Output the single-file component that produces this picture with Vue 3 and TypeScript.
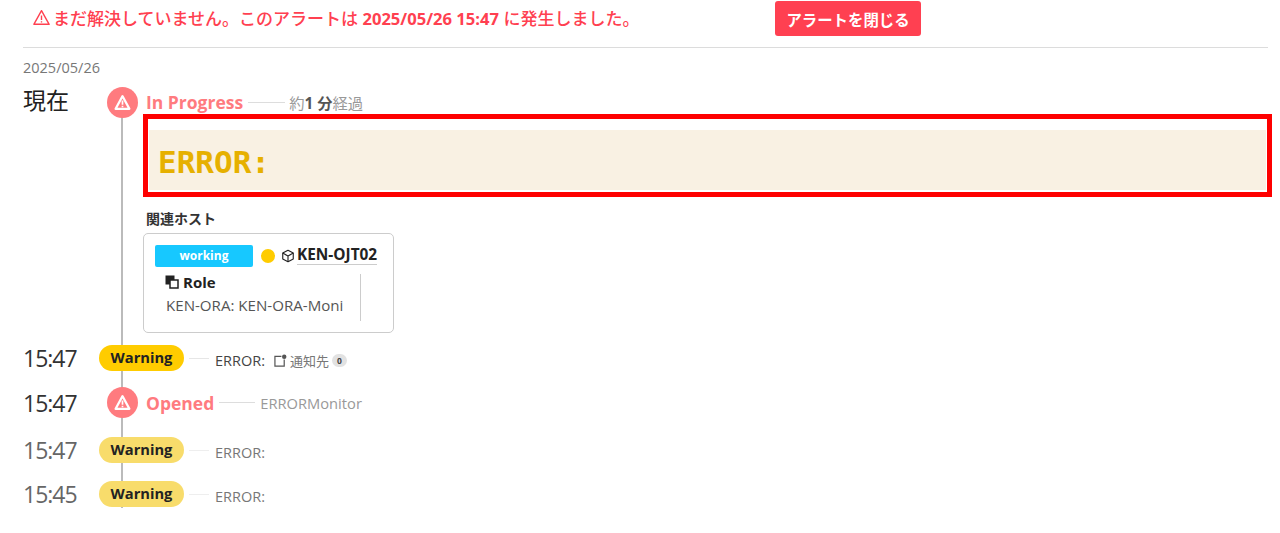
<script setup lang="ts">
interface Row { time: string; muted: boolean; message: string; notify: boolean }
const warningsA: Row[] = [{ time: '15:47', muted: false, message: 'ERROR:', notify: true }]
const warningsB: Row[] = [
  { time: '15:47', muted: true, message: 'ERROR:', notify: false },
  { time: '15:45', muted: true, message: 'ERROR:', notify: false },
]
</script>

<template>
  <div class="page">
    <header class="top">
      <p class="alert">
        <svg class="alert-icon" viewBox="0 0 16 16" fill="none" stroke="currentColor" stroke-width="1.3">
          <path d="M8 1.6 15.2 14.4H.8Z" stroke-linejoin="round" />
          <path d="M8 6v4.4M8 11.6v1.2" />
        </svg>
        <span>まだ解決していません。このアラートは <b>2025/05/26 15:47</b> に発生しました。</span>
      </p>
      <button class="close" type="button">アラートを閉じる</button>
    </header>

    <div class="date">2025/05/26</div>

    <div class="timeline">
      <div class="rail"></div>

      <section class="row status-row now">
        <div class="time now-time">現在</div>
        <div class="marker">
          <span class="circle">
            <svg viewBox="0 0 16 16"><path d="M8 2 14.5 14H1.5Z" fill="none" stroke="#fff" stroke-width="2" stroke-linejoin="round" /><path d="M8 6.2v3.8M8 11v1.4" stroke="#fff" stroke-width="1.6" /></svg>
          </span>
        </div>
        <div class="status-line">
          <strong class="status">In Progress</strong>
          <i class="dash long"></i>
          <span class="sub">約<b>1 分</b>経過</span>
        </div>
      </section>

      <div class="detail">
        <div class="highlight">
          <div class="message">ERROR:</div>
        </div>
        <h4 class="hosts-title">関連ホスト</h4>
        <div class="host-card">
          <div class="host-head">
            <span class="tag">working</span>
            <span class="dot"></span>
            <svg class="cube" viewBox="0 0 16 16" fill="none" stroke="#222" stroke-width="1.3" stroke-linejoin="round">
              <path d="M8 1.5 14 4.7V11.3L8 14.5 2 11.3V4.7Z" />
              <path d="M2 4.7 8 8 14 4.7M8 8V14.5" />
            </svg>
            <span class="host-name">KEN-OJT02</span>
          </div>
          <div class="host-body">
            <div class="role-col">
              <div class="role-title">
                <svg class="role-icon" viewBox="0 0 14 14">
                  <rect x="0.5" y="0.5" width="9" height="9" fill="#222" />
                  <rect x="5" y="5" width="8" height="8" fill="#fff" stroke="#222" stroke-width="1.5" />
                </svg>
                Role
              </div>
              <div class="role-text">KEN-ORA: KEN-ORA-Moni</div>
            </div>
            <div class="divider"></div>
          </div>
        </div>
      </div>

      <section v-for="r in warningsA" :key="r.time" class="row warn-row first-warn">
        <div class="time">{{ r.time }}</div>
        <div class="marker"><span class="pill">Warning</span></div>
        <div class="warn-line">
          <i class="dash short"></i>
          <span class="msg">{{ r.message }}</span>
          <span v-if="r.notify" class="notify">
            <svg class="bell" viewBox="0 0 14 14" fill="none" stroke="#555" stroke-width="1.3">
              <path d="M8 2.5H1V13H11V6" />
              <circle cx="11" cy="3" r="2.4" fill="#555" stroke="none" />
            </svg>
            通知先<span class="count">0</span>
          </span>
        </div>
      </section>

      <section class="row status-row opened">
        <div class="time">15:47</div>
        <div class="marker">
          <span class="circle">
            <svg viewBox="0 0 16 16"><path d="M8 2 14.5 14H1.5Z" fill="none" stroke="#fff" stroke-width="2" stroke-linejoin="round" /><path d="M8 6.2v3.8M8 11v1.4" stroke="#fff" stroke-width="1.6" /></svg>
          </span>
        </div>
        <div class="status-line">
          <strong class="status">Opened</strong>
          <i class="dash long opened-dash"></i>
          <span class="sub opened-sub">ERRORMonitor</span>
        </div>
      </section>

      <section v-for="r in warningsB" :key="r.time" class="row warn-row muted">
        <div class="time">{{ r.time }}</div>
        <div class="marker"><span class="pill">Warning</span></div>
        <div class="warn-line">
          <i class="dash short"></i>
          <span class="msg">{{ r.message }}</span>
        </div>
      </section>
    </div>
  </div>
</template>

<style scoped>
.page {
  height: 533px;
  overflow: hidden;
  box-sizing: border-box;
  padding: 0 12px 0 23px;
  background: #fff;
  color: #222;
  font-family: "Open Sans", "Noto Sans CJK JP", sans-serif;
}
.top {
  box-sizing: border-box;
  border-bottom: 1px solid #dcdcdc;
  display: flex;
  align-items: flex-start;
  height: 48px;
}
.alert {
  margin: 0;
  width: 752px;
  height: 34px;
  padding-left: 10px;
  box-sizing: border-box;
  display: flex;
  align-items: center;
  gap: 3px;
  color: #ff4050;
  font-size: 17px;
  font-weight: 500;
  white-space: nowrap;
}
.alert b { font-weight: 700; font-size: 16.6px; }
.alert-icon { width: 17px; height: 17px; flex: none; }
.close {
  margin-top: 1px;
  width: 146px;
  height: 35px;
  border: 0;
  border-radius: 3px;
  background: #ff4051;
  color: #fff;
  font: 700 15.4px "Noto Sans CJK JP", sans-serif;
}
.date {
  margin-top: 11px;
  height: 18px;
  line-height: 18px;
  font-size: 14.5px;
  color: #777;
}
.timeline { position: relative; margin-top: 10px; }
.rail {
  position: absolute;
  left: 98px;
  top: 20px;
  height: 401px;
  width: 2px;
  background: #bbb;
}
.row {
  position: relative;
  display: grid;
  grid-template-columns: 76px 47px 1fr;
  align-items: center;
}
.time { font-size: 23px; letter-spacing: -1px; line-height: 30px; color: #333; }
.now { height: 30px; grid-template-rows: 30px; }
.now-time { font-size: 23px; letter-spacing: 0; color: #222; margin-bottom: 4px; }
.marker { display: flex; justify-content: center; }
.circle {
  width: 31px;
  height: 31px;
  border-radius: 50%;
  background: #ff7b7f;
  display: flex;
  align-items: center;
  justify-content: center;
}
.circle svg { width: 17px; height: 17px; }
.status-line { display: flex; align-items: center; }
.status { font-size: 17.5px; line-height: 24px; color: #ff7b7f; font-weight: 700; }
.sub { font-size: 15.3px; color: #999; white-space: nowrap; }
.sub b { color: #555; font-weight: 700; }
.opened-sub { font-size: 14.7px; }
.dash { display: block; height: 1px; background: #ddd; flex: none; }
.long { width: 37px; margin: 0 4px 0 5px; }
.opened-dash { width: 36px; margin: 0 5px 0 5px; }
.short { width: 20px; margin: -4px 6px 0 5px; }
.detail { margin-left: 122px; }
.highlight {
  margin: -3px 0 0 -2px;
  width: 1129px;
  height: 83px;
  box-sizing: border-box;
  border: 5px solid #fe0000;
  padding: 11px 1px 2px;
  background: #fff;
  position: relative;
}
.message {
  height: 60px;
  box-sizing: border-box;
  padding: 14px 0 0 9px;
  background: #f9f1e3;
  color: #e6b000;
  font: 700 31px/36px "DejaVu Sans Mono", monospace;
}
.hosts-title {
  margin: 12px 0 0 1px;
  font: 700 14px/18px "Noto Sans CJK JP", sans-serif;
  color: #333;
}
.host-card {
  margin: 6px 0 0 -2px;
  width: 251px;
  height: 100px;
  box-sizing: border-box;
  border: 1px solid #ccc;
  border-radius: 5px;
  padding: 11px 11px 0;
}
.host-head { display: flex; align-items: center; height: 22px; }
.tag {
  width: 98px;
  height: 22px;
  border-radius: 2px;
  background: #17c8ff;
  color: #fff;
  font-size: 12px;
  font-weight: 700;
  line-height: 22px;
  text-align: center;
}
.dot { width: 14px; height: 14px; margin-left: 8px; border-radius: 50%; background: #ffcc00; flex: none; }
.cube { width: 14px; height: 14px; margin-left: 6px; flex: none; }
.host-name {
  margin: 0 0 2px 2px;
  font-size: 15.4px;
  line-height: 18px;
  font-weight: 700;
  color: #222;
  border-bottom: 1px solid #ccc;
  white-space: nowrap;
}
.host-body { display: flex; margin-top: 7px; padding-left: 11px; }
.role-col { width: 194px; margin-top: -2px; }
.role-title { display: flex; align-items: center; gap: 4px; font-size: 15px; line-height: 20px; font-weight: 700; color: #222; }
.role-icon { width: 14px; height: 14px; margin-left: -1px; }
.role-text { margin-top: 3px; font-size: 15.1px; line-height: 20px; color: #555; white-space: nowrap; }
.divider { width: 1px; height: 47px; background: #ccc; }
.warn-row { height: 26px; grid-template-columns: 76px 85px 1fr; }
.first-warn { margin-top: 10px; }
.opened { height: 31px; margin-top: 18px; }
.muted { margin-bottom: 18px; }
.opened + .muted { margin-top: 17px; }
.pill {
  width: 85px;
  height: 26px;
  flex: none;
  border-radius: 13px;
  background: #ffcc00;
  color: #222;
  font-size: 14.7px;
  font-weight: 700;
  line-height: 25px;
  text-align: center;
}
.warn-row .marker { justify-content: flex-start; }
.warn-line { display: flex; align-items: center; padding-top: 5px; }
.msg { font-size: 14.5px; color: #444; }
.muted .msg { color: #777; }
.muted .warn-line { padding-top: 4px; }
.muted .time { color: #666; }
.muted .pill { background: #f8dc6b; }
.muted .dash { background: #eee; }
.first-warn .dash { background: #e6e6e6; }
.notify { display: flex; align-items: center; margin-left: 9px; font-size: 13px; color: #777; white-space: nowrap; }
.bell { width: 13px; height: 13px; margin-right: 3px; }
.count {
  margin-left: 3px;
  width: 15px;
  height: 13px;
  border-radius: 7px;
  background: #e2e2e2;
  color: #444;
  font-size: 8.5px;
  font-weight: 700;
  line-height: 13px;
  text-align: center;
}
</style>
